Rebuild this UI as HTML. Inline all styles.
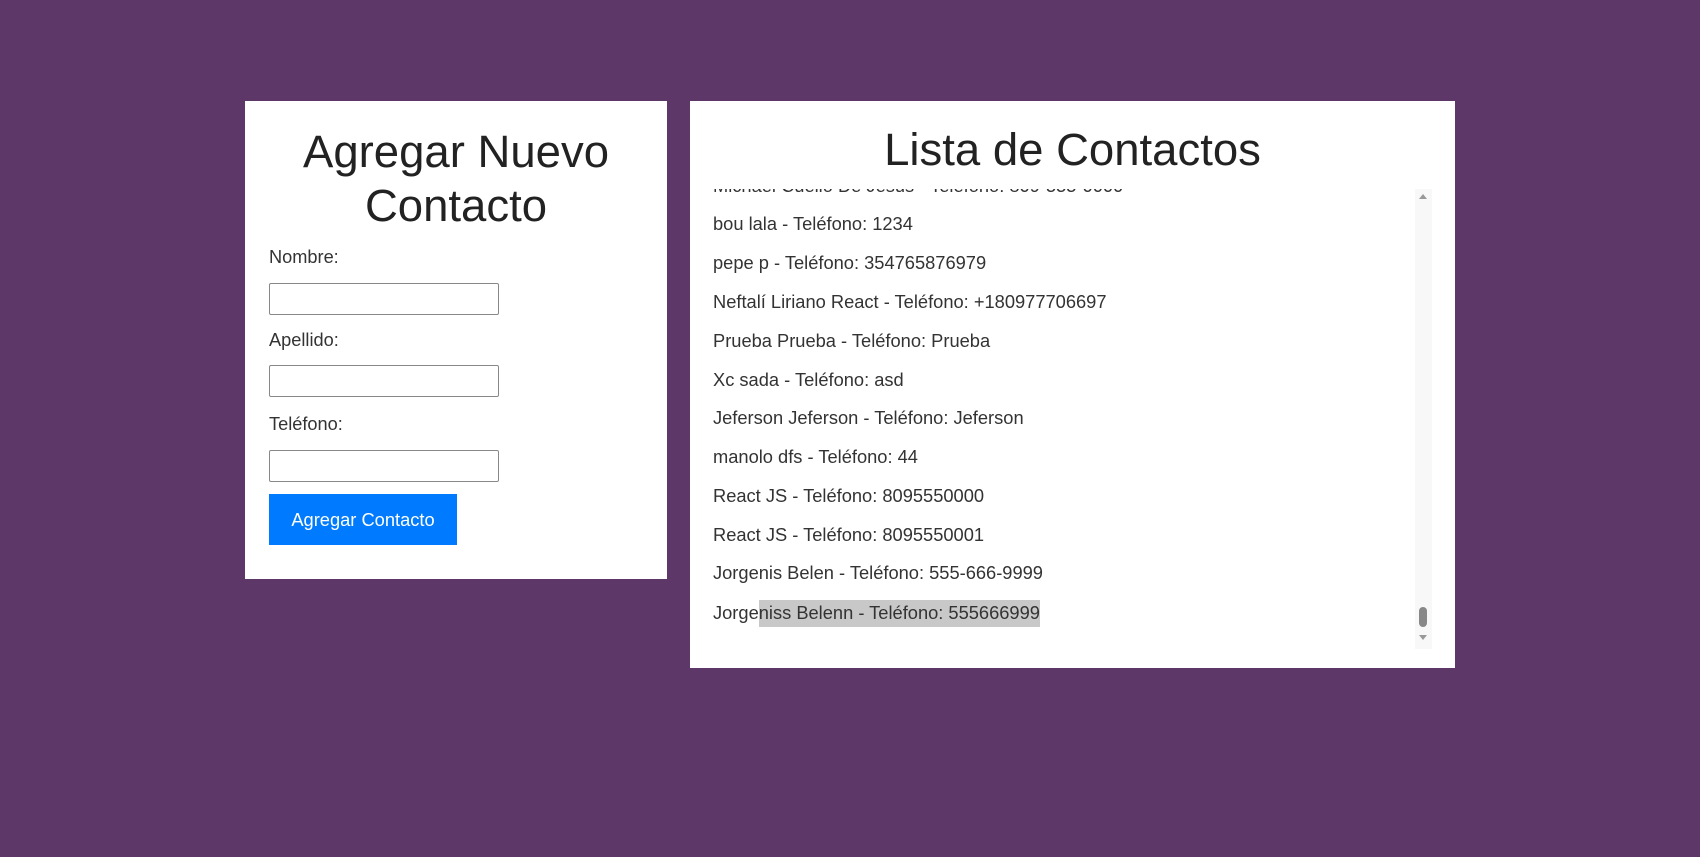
<!DOCTYPE html>
<html><head><meta charset="utf-8"><style>
body{margin:0;width:1700px;height:857px;background:#5c3768;font-family:"Liberation Sans",sans-serif;color:#333;position:relative;overflow:hidden}
.card{position:absolute;background:#fff}
.abs{position:absolute;white-space:nowrap}
h1{margin:0;font-weight:normal;font-size:45.5px;line-height:54px;text-align:center;color:#222;position:absolute}
.lbl{font-size:18.2px;left:24px}
.inp{position:absolute;left:24px;width:230px;height:32px;border:1px solid #888;border-radius:2px;box-sizing:border-box}
.btn{position:absolute;left:24px;top:393px;width:188px;height:51px;background:#007bff;color:#fff;font-size:18.3px;line-height:51px;text-align:center}
.list{position:absolute;left:0;top:88px;width:745px;height:460px;overflow:hidden}
.it{position:absolute;left:23px;font-size:18.3px;line-height:22px;white-space:nowrap}
</style></head><body>
<div class="card" style="left:245px;top:101px;width:422px;height:478px">
<h1 style="left:0;top:24px;width:422px">Agregar Nuevo<br>Contacto</h1>
<div class="abs lbl" style="top:146px">Nombre:</div>
<div class="inp" style="top:182px"></div>
<div class="abs lbl" style="top:229px">Apellido:</div>
<div class="inp" style="top:264px"></div>
<div class="abs lbl" style="top:313px">Teléfono:</div>
<div class="inp" style="top:349px"></div>
<div class="btn">Agregar Contacto</div>
</div>
<div class="card" style="left:690px;top:101px;width:765px;height:567px">
<h1 style="left:0;top:22px;width:765px">Lista de Contactos</h1>
<div class="list">
<div class="it" style="top:-14px">Michael Cuello De Jesus - Teléfono: 809-555-0000</div>
<div class="it" style="top:24px">bou lala - Teléfono: 1234</div>
<div class="it" style="top:63px">pepe p - Teléfono: 354765876979</div>
<div class="it" style="top:102px">Neftalí Liriano React - Teléfono: +180977706697</div>
<div class="it" style="top:141px">Prueba Prueba - Teléfono: Prueba</div>
<div class="it" style="top:180px">Xc sada - Teléfono: asd</div>
<div class="it" style="top:218px">Jeferson Jeferson - Teléfono: Jeferson</div>
<div class="it" style="top:257px">manolo dfs - Teléfono: 44</div>
<div class="it" style="top:296px">React JS - Teléfono: 8095550000</div>
<div class="it" style="top:335px">React JS - Teléfono: 8095550001</div>
<div class="it" style="top:373px">Jorgenis Belen - Teléfono: 555-666-9999</div>
<div style="position:absolute;left:69px;top:411px;width:281px;height:27px;background:#c8c8c8"></div>
<div class="it" style="top:413px">Jorgeniss Belenn - Teléfono: 555666999</div>
</div>
<div style="position:absolute;left:725px;top:88px;width:17px;height:460px;background:#f8f8f8"></div>
<div style="position:absolute;left:729px;top:93px;width:0;height:0;border-left:4px solid transparent;border-right:4px solid transparent;border-bottom:5px solid #999"></div>
<div style="position:absolute;left:729px;top:534px;width:0;height:0;border-left:4px solid transparent;border-right:4px solid transparent;border-top:5px solid #999"></div>
<div style="position:absolute;left:729px;top:506px;width:8px;height:20px;border-radius:4px;background:#888"></div>
</div>
</body></html>
